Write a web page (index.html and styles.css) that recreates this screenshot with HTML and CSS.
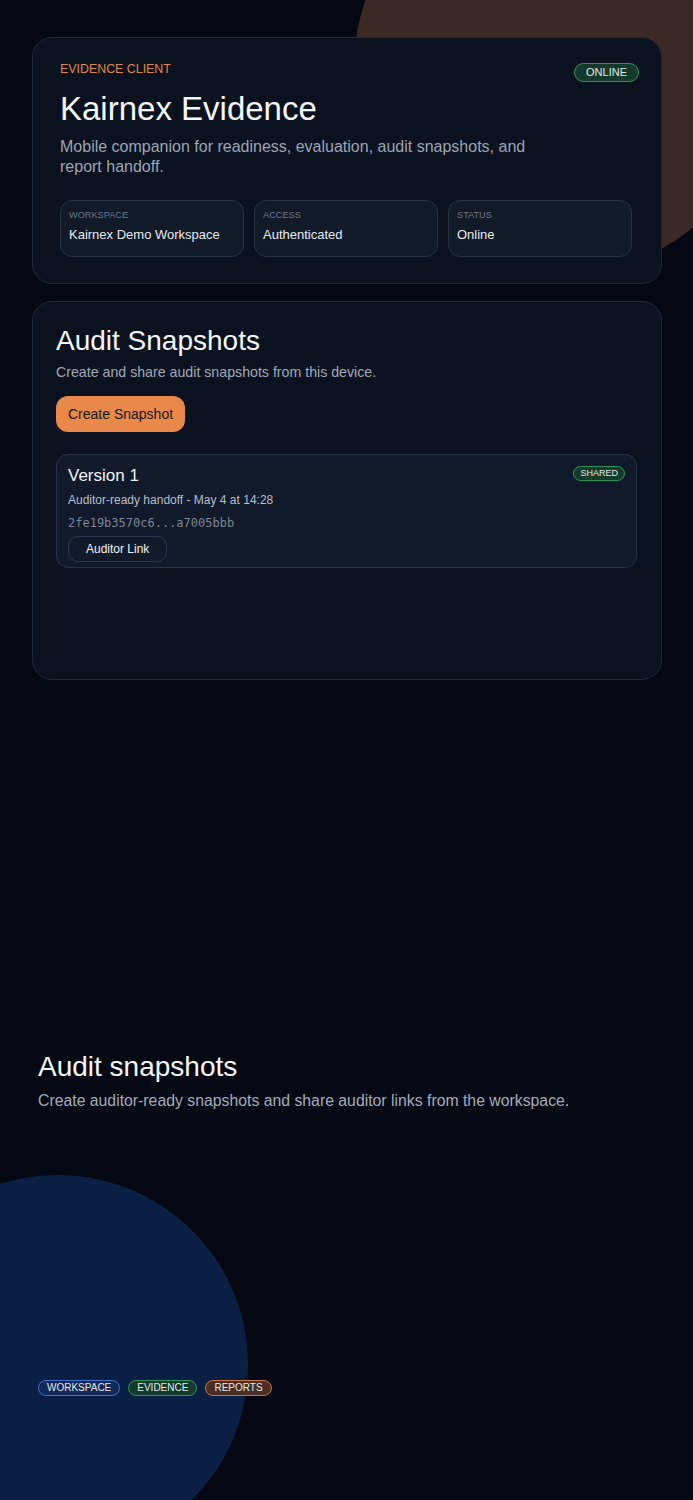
FILE: index.html
```html
<!DOCTYPE html>
<html>
<head>
  <title>Kairnex Evidence</title>
  <link rel="stylesheet" href="styles.css">
</head>
<body>
  <div class="backdrop">
    <div class="glow glow-warm"></div>
    <div class="glow glow-cool"></div>
  </div>

  <div class="page">
    <section class="card hero">
      <span class="pill pill-green hero-badge">ONLINE</span>
      <div class="eyebrow">EVIDENCE CLIENT</div>
      <h1>Kairnex Evidence</h1>
      <p class="lead">Mobile companion for readiness, evaluation, audit snapshots, and report handoff.</p>

      <div class="facts">
        <div class="fact">
          <div class="fact-label">WORKSPACE</div>
          <div class="fact-value">Kairnex Demo Workspace</div>
        </div>
        <div class="fact">
          <div class="fact-label">ACCESS</div>
          <div class="fact-value">Authenticated</div>
        </div>
        <div class="fact">
          <div class="fact-label">STATUS</div>
          <div class="fact-value">Online</div>
        </div>
      </div>
    </section>

    <section class="card snapshots">
      <h2>Audit Snapshots</h2>
      <p class="sub">Create and share audit snapshots from this device.</p>
      <button class="primary">Create Snapshot</button>

      <div class="snapshot">
        <div class="snapshot-head">
          <div class="snapshot-title">Version 1</div>
          <span class="pill pill-green pill-small">SHARED</span>
        </div>
        <div class="snapshot-meta">Auditor-ready handoff - May 4 at 14:28</div>
        <div class="snapshot-hash">2fe19b3570c6...a7005bbb</div>
        <button class="ghost">Auditor Link</button>
      </div>
    </section>

    <section class="feature">
      <h2>Audit snapshots</h2>
      <p class="feature-text">Create auditor-ready snapshots and share auditor links from the workspace.</p>

      <div class="tags">
        <span class="pill pill-blue">WORKSPACE</span>
        <span class="pill pill-green">EVIDENCE</span>
        <span class="pill pill-orange">REPORTS</span>
      </div>
    </section>
  </div>
</body>
</html>
```

FILE: styles.css
```css
html, body {
  margin: 0;
  height: 1500px;
  overflow: hidden;
}
body {
  position: relative;
  background-color: #030812;
  font-family: "Liberation Sans", Arial, sans-serif;
  color: #f1f4f8;
}

/* background blobs, clipped to the page */
.backdrop {
  position: absolute;
  top: 0;
  left: 0;
  right: 0;
  bottom: 0;
  overflow: hidden;
  z-index: 0;
}
.glow {
  position: absolute;
  border-radius: 50%;
}
.glow-warm {
  width: 414px;
  height: 414px;
  left: 354px;
  top: -139px;
  background-color: #3a2924;
}
.glow-cool {
  width: 380px;
  height: 380px;
  left: -132px;
  top: 1175px;
  background-color: #0b1f45;
}

.page {
  position: relative;
  z-index: 1;
  padding: 37px 31px 0 32px;
}

.card {
  background-color: #0a1220;
  border: 1px solid #1e293a;
  border-radius: 20px;
}

/* hero */
.hero {
  position: relative;
  padding: 24px 22px 26px 27px;
}
.hero-badge {
  position: absolute;
  top: 25px;
  right: 22px;
}
.eyebrow {
  color: #e08847;
  font-size: 12.4px;
  line-height: 15px;
}
h1 {
  margin: 12px 0 0;
  font-size: 33px;
  font-weight: normal;
  line-height: 40px;
  color: #f4f6fa;
}
.lead {
  margin: 8px 0 0;
  max-width: 480px;
  font-size: 16px;
  line-height: 20px;
  color: #9ba5b4;
}
.facts {
  display: grid;
  grid-template-columns: repeat(3, 184px);
  gap: 10px;
  margin-top: 23px;
}
.fact {
  height: 55px;
  padding: 0 8px;
  background-color: #111a29;
  border: 1px solid #253145;
  border-radius: 12px;
}
.fact-label {
  margin-top: 9px;
  font-size: 9.2px;
  color: #6c7789;
}
.fact-value {
  margin-top: 7px;
  font-size: 13px;
  color: #e6eaf0;
}

/* pills */
.pill {
  display: inline-block;
  padding: 0 11px;
  border: 1px solid;
  border-radius: 999px;
  font-size: 11px;
  line-height: 17px;
  color: #e3ece7;
}
.pill-small {
  padding: 0 6px;
  font-size: 9px;
  line-height: 13px;
}
.pill-green {
  background-color: #133a2b;
  border-color: #2a9558;
}
.pill-blue {
  background-color: #13295a;
  border-color: #3f6fd0;
}
.pill-orange {
  background-color: #4a2e25;
  border-color: #c77843;
}

/* snapshots card */
.snapshots {
  margin-top: 17px;
  min-height: 331px;
  padding: 22px 24px 24px 23px;
}
h2 {
  margin: 0;
  font-size: 28px;
  font-weight: normal;
  line-height: 34px;
  color: #f4f6fa;
}
.sub {
  margin: 5px 0 0;
  font-size: 14.2px;
  line-height: 18px;
  color: #a0a9b7;
}
.primary {
  margin-top: 15px;
  height: 36px;
  padding: 0 12px;
  background-color: #e8894a;
  color: #1a1410;
  border: none;
  border-radius: 12px;
  font-family: inherit;
  font-size: 14px;
  cursor: pointer;
}
.snapshot {
  margin-top: 22px;
  padding: 11px 11px 5px 11px;
  background-color: #111a2a;
  border: 1px solid #26324a;
  border-radius: 12px;
}
.snapshot-head {
  display: flex;
  justify-content: space-between;
  align-items: flex-start;
}
.snapshot-title {
  font-size: 17px;
  line-height: 20px;
  color: #f1f4f8;
}
.snapshot-meta {
  margin-top: 7px;
  font-size: 12px;
  line-height: 14px;
  color: #b7bfcc;
}
.snapshot-hash {
  margin-top: 9px;
  font-family: "DejaVu Sans Mono", monospace;
  font-size: 12px;
  line-height: 14px;
  color: #7c8696;
}
.ghost {
  margin-top: 6px;
  height: 26px;
  padding: 0 17px;
  background-color: transparent;
  color: #f1f4f8;
  border: 1px solid #2c3850;
  border-radius: 10px;
  font-family: inherit;
  font-size: 12px;
  cursor: pointer;
}

/* feature section */
.feature {
  margin-top: 370px;
  padding-left: 6px;
}
.feature-text {
  margin: 8px 0 0;
  font-size: 15.8px;
  line-height: 18px;
  color: #a3acba;
}
.tags {
  display: flex;
  gap: 8px;
  margin-top: 270px;
}
.tags .pill {
  padding: 0 8px;
  font-size: 10px;
  line-height: 14px;
}
```
